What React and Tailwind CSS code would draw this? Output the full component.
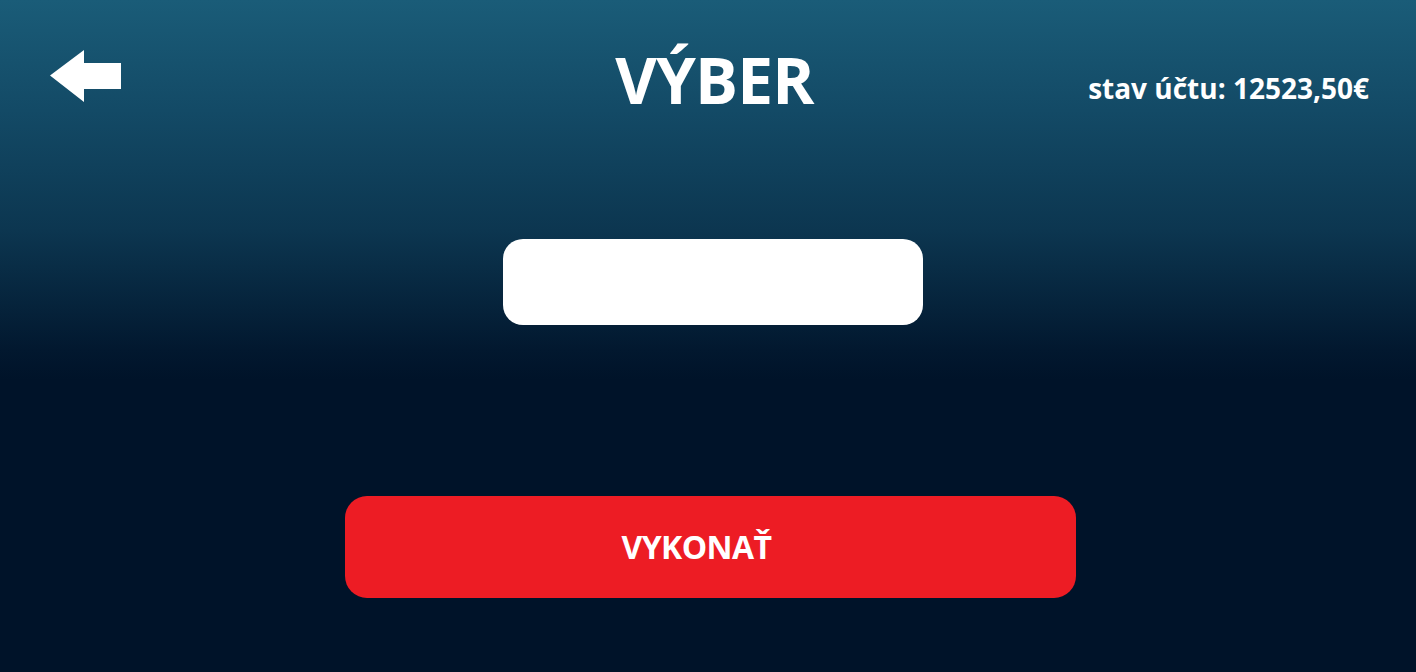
export default function App() {
  return (
    <div
      className="w-full h-[672px] flex flex-col text-white bg-[linear-gradient(to_bottom,#1a5c78_0px,#134a66_110px,#0c3650_230px,#02182f_350px,#001329_380px,#001329_672px)]"
      style={{ fontFamily: '"Open Sans", "Noto Sans", sans-serif' }}
    >
      <div className="grid grid-cols-[1fr_auto_1fr] items-start pt-[40px] px-[47px] pl-[50px]">
        <button className="w-[72px] h-[52px] mt-[10px] cursor-pointer">
          <svg width="72" height="52" viewBox="0 0 72 52" className="block">
            <path d="M0 25.5 L34 0 L34 13 L71 13 L71 39 L34 39 L34 52 Z" fill="#fff" />
          </svg>
        </button>
        <h1 className="text-[64px] font-bold leading-[80px] tracking-[-0.8px] translate-x-[5px]">VÝBER</h1>
        <div className="justify-self-end text-[28px] font-bold leading-none mt-[34px]">stav účtu: 12523,50€</div>
      </div>

      <div className="flex flex-col items-center mt-[119px]">
        <input
          className="w-[420px] h-[86px] rounded-[20px] bg-white text-black text-[32px] px-6 outline-none translate-x-[5px]"
          type="text"
        />
        <button className="mt-[171px] w-[731px] h-[102px] rounded-[22px] bg-[#ed1c24] text-white text-[32px] font-bold tracking-[-0.6px] pr-[27px] cursor-pointer translate-x-[2px]">
          VYKONAŤ
        </button>
      </div>
    </div>
  );
}
